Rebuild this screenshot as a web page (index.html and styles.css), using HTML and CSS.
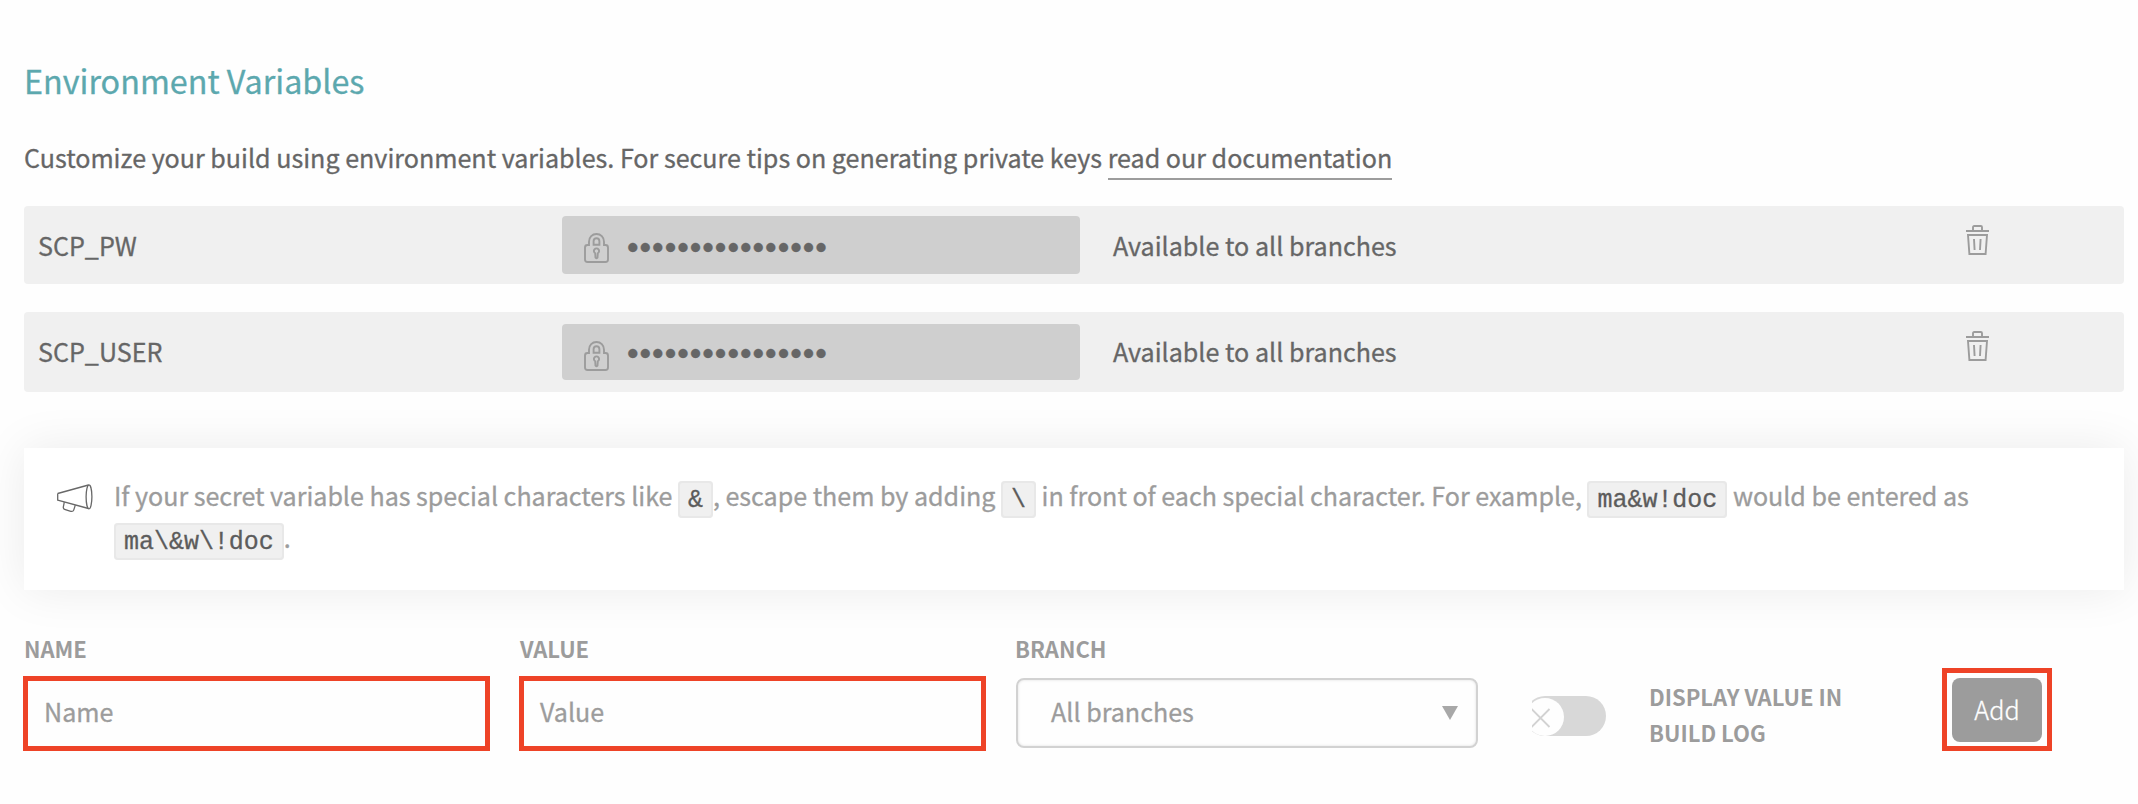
FILE: index.html
```html
<!DOCTYPE html>
<html lang="en">
<head>
<meta charset="utf-8">
<title>Environment Variables</title>
<link rel="stylesheet" href="styles.css">
</head>
<body>
<svg class="sprite" width="0" height="0">
  <symbol id="lock" viewBox="0 0 25 30">
    <path d="M5 12V8.700C5 4.200 8.300 1 12.500 1S20 4.200 20 8.700V12h1.500q2.500 0 2.500 2.500v12q0 2.500-2.500 2.500h-18Q1 29 1 26.500v-12Q1 12 3.500 12Z"/>
    <path d="M9.600 11.700V8.300q0-3 2.900-3t2.900 3v3.400Z"/>
    <path d="M11.200 20.200a2.600 2.600 0 1 1 2.600 0l-.3 4.500q-1 1-2 0Z"/>
  </symbol>
  <symbol id="trash" viewBox="0 0 23 30">
    <path d="M0 6h23M7 5.500V2.200Q7 1 8.200 1h6.600Q16 1 16 2.200v3.300M2 10h19l-1.400 19H3.400ZM8 14l.6 11M14.600 14 14 25"/>
  </symbol>
</svg>
<main class="page">
  <h1 class="title">Environment Variables</h1>
  <p class="intro">Customize your build using environment variables. For secure tips on generating private keys <a class="link" href="#">read our documentation</a></p>

  <section class="vars">
    <div class="var">
      <span class="var-name">SCP_PW</span>
      <div class="secret"><svg class="lock"><use href="#lock"/></svg><span class="dots">••••••••••••••••</span></div>
      <span class="var-branch">Available to all branches</span>
      <svg class="trash"><use href="#trash"/></svg>
    </div>
    <div class="var var-tall">
      <span class="var-name">SCP_USER</span>
      <div class="secret"><svg class="lock"><use href="#lock"/></svg><span class="dots">••••••••••••••••</span></div>
      <span class="var-branch">Available to all branches</span>
      <svg class="trash"><use href="#trash"/></svg>
    </div>
  </section>

  <aside class="callout">
    <svg class="megaphone" viewBox="0 0 36 30">
      <path d="M.7 9.500 31.500 1M.7 9.500v6.700L31.500 24.500"/>
      <ellipse cx="32" cy="12.800" rx="2.900" ry="12"/>
      <path d="M7.300 18.200 6.300 23.200Q6.200 24.800 7.600 25.300L13 27.100q3 1 3.700-1l1.600-5"/>
    </svg>
    <p class="callout-text">If your secret variable has special characters like <code>&amp;</code>, escape them by adding <code>\</code> in front of each special character. For example, <code>ma&amp;w!doc</code> would be entered as <code>ma\&amp;w\!doc</code>.</p>
  </aside>

  <form class="form">
    <label class="field"><span class="label">Name</span><span class="frame">Name</span></label>
    <label class="field"><span class="label">Value</span><span class="frame">Value</span></label>
    <label class="branch"><span class="label">Branch</span>
      <span class="select">All branches<svg class="arrow" viewBox="0 0 16 14"><path d="M0 0h16L8 14Z"/></svg></span>
    </label>
    <svg class="toggle" viewBox="0 0 74 40">
      <rect class="track" x="-7" width="81" height="40" rx="20"/>
      <circle class="knob" cx="13" cy="21" r="19"/>
      <path class="cross" d="M-.5 13 17.500 31M17.500 13-.5 31"/>
    </svg>
    <span class="toggle-label">Display value in build log</span>
    <div class="add-frame"><button class="add" type="button">Add</button></div>
  </form>
</main>
</body>
</html>
```
FILE: styles.css
```css
* { box-sizing: border-box; }
body {
  margin: 0;
  background: #fefefe;
  color: #666;
  font-family: "Noto Sans CJK SC", "Noto Sans", sans-serif;
  font-size: 25.1px;
  line-height: 42px;
  -webkit-text-stroke: .3px currentColor;
}
.sprite { display: block; }
.page { padding: 56px 14px 0 24px; }
.title {
  margin: 0 0 32px;
  color: #5ca8ae;
  font-size: 32.3px;
  font-weight: 400;
  line-height: 48px;
}
.intro { margin: 0 0 28px; letter-spacing: -.01px; }
.link {
  color: inherit;
  text-decoration: none;
  padding-bottom: 3px;
  border-bottom: 2px solid #9c9c9c;
}
.vars { display: grid; gap: 28px; }
.var {
  display: grid;
  grid-template-columns: 524px 551px 853px 23px;
  align-items: start;
  height: 78px;
  padding-left: 14px;
  border-radius: 4px;
  background: #f0f0f0;
  line-height: 78px;
}
.var-tall { height: 80px; }
.secret {
  display: flex;
  align-items: flex-start;
  gap: 18px;
  width: 518px;
  height: 58px;
  margin-top: 10px;
  padding-left: 22px;
  border-radius: 4px;
  background: #cfcfcf;
}
.var-tall .secret { height: 56px; margin-top: 12px; }
.lock, .trash { fill: none; stroke: #9c9c9c; }
.lock { width: 25px; height: 30px; margin-top: 17px; stroke-width: 1.9; }
.trash { width: 23px; height: 30px; margin-top: 19px; stroke-width: 1.9; }
.dots {
  font: 33px/64px "Liberation Sans", Arial, sans-serif;
  letter-spacing: 1px;
}
.var-tall .dots { line-height: 60px; }
.callout {
  display: flex;
  height: 142px;
  margin-top: 56px;
  padding: 26px 33px 0;
  background: #fff;
  box-shadow: 0 0 48px rgba(0, 0, 0, .08);
  color: #9c9c9c;
}
.megaphone {
  flex: none;
  width: 36px;
  height: 30px;
  margin: 9.500px 21px 0 0;
  fill: none;
  stroke: #686868;
  stroke-width: 1.3;
  stroke-linejoin: round;
}
.callout-text { margin: 0; width: 1900px; letter-spacing: -.027px; }
.callout code {
  padding: 3px 8px 1px;
  border: 2px solid #e8e8e8;
  border-radius: 4px;
  background: #f0f0f0;
  color: #5c5c5c;
  font: 25px/1 "Liberation Mono", monospace;
  vertical-align: -1px;
}
.form {
  display: flex;
  align-items: flex-start;
  margin: 40px 0 0 -1px;
  color: #9c9c9c;
}
.label, .toggle-label {
  display: block;
  font-size: 22px;
  font-weight: 700;
  line-height: 36px;
  text-transform: uppercase;
  -webkit-text-stroke: 0;
}
.field { width: 467px; margin-right: 29px; }
.field .label { padding-left: 1px; }
.frame {
  display: block;
  height: 75px;
  margin-top: 10px;
  padding-left: 16px;
  border: 5px solid #ee4327;
  line-height: 61px;
}
.branch { width: 462px; margin: 0 54px 0 1px; }
.branch .label { margin-left: -1px; }
.select {
  display: flex;
  justify-content: space-between;
  height: 70px;
  margin-top: 12px;
  padding: 0 18px 0 33px;
  border: 2px solid #d2d2d2;
  border-radius: 8px;
  box-shadow: inset 0 0 3px rgba(0, 0, 0, .12);
  line-height: 62px;
}
.arrow { width: 16px; height: 14px; margin-top: 26px; fill: #a8a8a8; }
.toggle { width: 74px; height: 40px; margin: 66px 43px 0 0; overflow: hidden; }
.track { fill: #d8d8d8; }
.knob { fill: #fefefe; }
.cross { fill: none; stroke: #d2d2d2; stroke-width: 1.8; }
.toggle-label { width: 220px; margin: 48px 73px 0 0; }
.add-frame {
  margin-top: 38px;
  padding: 5px 5px 4px;
  border: 5px solid #ee4327;
}
.add {
  display: block;
  width: 90px;
  height: 64px;
  padding: 0 0 2px;
  border: 0;
  border-radius: 8px;
  background: #9c9c9c;
  color: #fff;
  font: 300 25.2px/62px "Noto Sans CJK SC", sans-serif;
}
```
